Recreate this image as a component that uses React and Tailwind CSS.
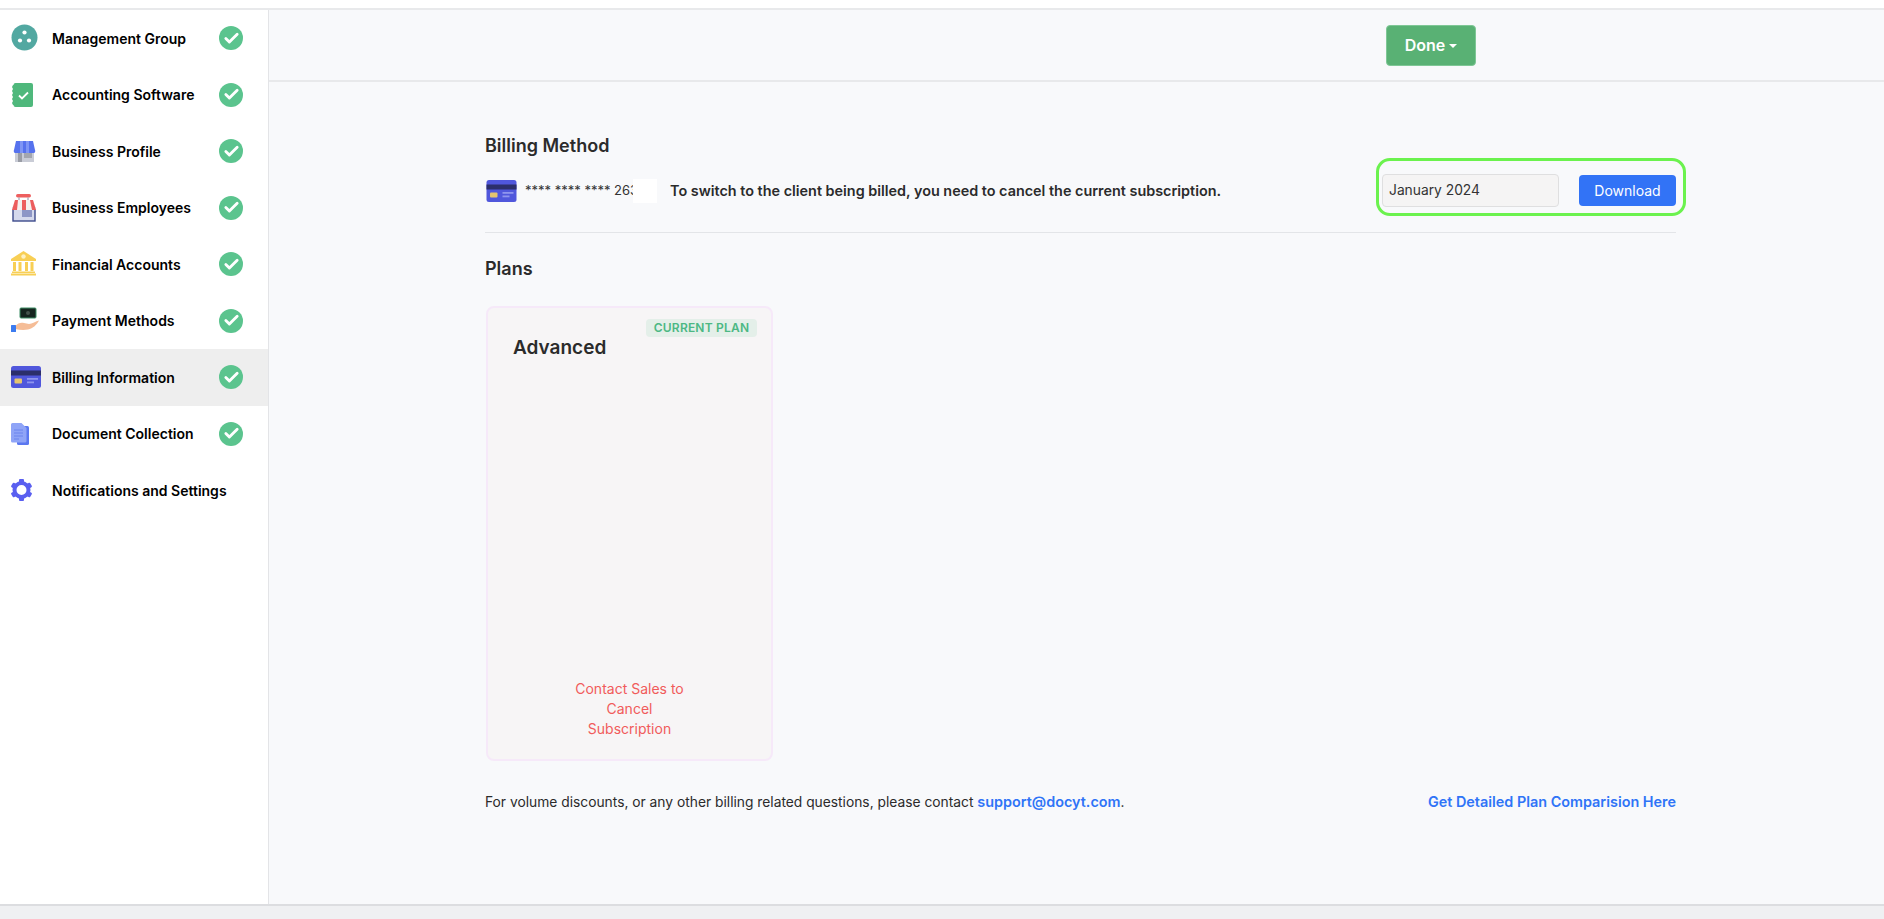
import { Check } from "lucide-react";

const ManagementIcon = () => (
  <svg viewBox="0 0 30 30" className="w-[30px] h-[30px]">
    <circle cx="14.5" cy="14.5" r="13" fill="#52a8a1" />
    <circle cx="14.5" cy="9.5" r="2.1" fill="#fff" />
    <circle cx="10" cy="17.5" r="2.1" fill="#fff" />
    <circle cx="19" cy="17.5" r="2.1" fill="#fff" />
  </svg>
);

const AccountingIcon = () => (
  <svg viewBox="0 0 30 30" className="w-[30px] h-[30px]">
    <rect x="3.5" y="3" width="19.5" height="24" rx="2" fill="#4fb87c" />
    <path d="M3 5l-1 2 1 2-1 2 1 2-1 2 1 2-1 2 1 2-1 2 1 2 2 0 0-20z" fill="#4fb87c" />
    <path d="M9 15.5l3 3 6-6" fill="none" stroke="#fff" strokeWidth="1.8" />
  </svg>
);

const ProfileIcon = () => (
  <svg viewBox="0 0 30 30" className="w-[30px] h-[30px]">
    <rect x="5" y="15" width="19" height="11" fill="#c9ccd6" />
    <rect x="8" y="17" width="4" height="9" fill="#9a9da6" />
    <rect x="14" y="17" width="8" height="5" fill="#a3a6af" />
    <path d="M6 5h17l2 9a2 2 0 0 1-2 3H6a2 2 0 0 1-2-3z" fill="#5672ee" />
    <path d="M10 5h3v12h-3zM16 5h3v12h-3z" fill="#7e95f5" />
  </svg>
);

const EmployeesIcon = () => (
  <svg viewBox="0 0 30 30" className="w-[30px] h-[30px]">
    <rect x="6" y="1" width="15" height="3.5" rx="1.7" fill="#ee5f5f" />
    <path d="M9 4.5v3M18 4.5v3" stroke="#8b8fa8" strokeWidth="1" />
    <rect x="3" y="15" width="22" height="13" fill="#d5d9ec" />
    <rect x="3" y="15" width="22" height="13" fill="none" stroke="#3d4a8c" strokeWidth="1.4" />
    <rect x="12" y="17" width="10" height="7" fill="#8d96c6" />
    <path d="M5 7h18l3 8a2 2 0 0 1-2 2H3a2 2 0 0 1-1-2z" fill="#f4f0ee" />
    <path d="M5 7h3l-1 10H2zM12 7h4v10h-4zM20 7h3l3 10h-4z" fill="#ec5d5d" />
  </svg>
);

const FinancialIcon = () => (
  <svg viewBox="0 0 30 30" className="w-[30px] h-[30px]">
    <path d="M13.5 2L26 10v2H1v-2z" fill="#f8cf55" />
    <circle cx="13.5" cy="7.5" r="2.2" fill="#fdf1c4" />
    <path d="M3 13h3v9H3zM8.500 13h3v9h-3zM15 13h3v9h-3zM20.500 13h3v9h-3z" fill="#f8cf55" />
    <rect x="2" y="22.500" width="23" height="1.500" fill="#f8cf55" />
    <rect x="1" y="24.500" width="25" height="2" fill="#f8cf55" />
  </svg>
);

const PaymentIcon = () => (
  <svg viewBox="0 0 30 30" className="w-[30px] h-[30px]">
    <rect x="10" y="2" width="16" height="10" rx="1" fill="#16251f" stroke="#3e8f66" strokeWidth="1" />
    <circle cx="18" cy="7" r="2" fill="#44534c" />
    <path d="M5 20c3-3 6-4 9-3l5 1c3 0 7-3 10-3.500-2 4-6 8-11 9-4 .8-8 .5-13-.5z" fill="#f5bd97" />
    <rect x="1" y="19" width="5" height="7" rx=".5" fill="#3b7bf0" />
  </svg>
);

const BillingIcon = ({ className }) => (
  <svg viewBox="0 0 30 22" className={className}>
    <rect width="30" height="22" rx="2.500" fill="#5057dc" />
    <rect y="4.500" width="30" height="5" fill="#2c2f6b" />
    <rect x="3.500" y="12.500" width="7.500" height="5" rx="1" fill="#e6c56f" />
    <rect x="16" y="12" width="11" height="1.800" fill="#8f95ee" />
    <rect x="16" y="15.500" width="7" height="1.800" fill="#8f95ee" />
  </svg>
);

const DocumentIcon = () => (
  <svg viewBox="0 0 30 30" className="w-[30px] h-[30px]">
    <rect x="7" y="7" width="12" height="19" rx="1.500" fill="#5b78f0" />
    <path d="M2.500 4h9l5 5v13a1.500 1.500 0 0 1-1.500 1.500H2.500A1.500 1.500 0 0 1 1 22V5.500A1.500 1.500 0 0 1 2.500 4z" fill="#8fa4f7" />
    <path d="M4 11h9M4 14h9M4 17h9M4 20h5" stroke="#6b84ee" strokeWidth="1" />
  </svg>
);

const GearIcon = () => (
  <svg viewBox="0 0 30 30" className="w-[30px] h-[30px]">
    <circle cx="11.500" cy="15" r="7" fill="none" stroke="#5a5ff0" strokeWidth="4" />
    <g fill="#5a5ff0">
      <rect x="9" y="4" width="5" height="4" rx="1" />
      <rect x="9" y="22" width="5" height="4" rx="1" />
      <rect x="9" y="4" width="5" height="4" rx="1" transform="rotate(60 11.500 15)" />
      <rect x="9" y="4" width="5" height="4" rx="1" transform="rotate(120 11.500 15)" />
      <rect x="9" y="4" width="5" height="4" rx="1" transform="rotate(240 11.500 15)" />
      <rect x="9" y="4" width="5" height="4" rx="1" transform="rotate(300 11.500 15)" />
    </g>
  </svg>
);

const steps = [
  { label: "Management Group", icon: <ManagementIcon />, done: true },
  { label: "Accounting Software", icon: <AccountingIcon />, done: true },
  { label: "Business Profile", icon: <ProfileIcon />, done: true },
  { label: "Business Employees", icon: <EmployeesIcon />, done: true },
  { label: "Financial Accounts", icon: <FinancialIcon />, done: true },
  { label: "Payment Methods", icon: <PaymentIcon />, done: true },
  {
    label: "Billing Information",
    icon: <BillingIcon className="w-[30px] h-[22px] ml-px" />,
    done: true,
    active: true,
  },
  { label: "Document Collection", icon: <DocumentIcon />, done: true },
  { label: "Notifications and Settings", icon: <GearIcon />, done: false },
];

export default function App() {
  return (
    <div className="h-screen flex flex-col bg-white font-['Inter',sans-serif] text-[#2b2b2b] overflow-hidden">
      <div className="h-[10px] shrink-0 border-b-2 border-[#e8e9eb]" />

      <div className="flex-1 flex min-h-0">
        {/* Sidebar */}
        <aside className="w-[269px] shrink-0 border-r border-[#e3e4e7] bg-white">
          {steps.map((step) => (
            <div
              key={step.label}
              className={`flex items-center h-[56.5px] pl-[10px] ${step.active ? "bg-[#eeeeee]" : ""}`}
            >
              <div className="w-[42px] shrink-0">{step.icon}</div>
              <span className="w-[167px] shrink-0 text-[14px] font-semibold text-black whitespace-nowrap">
                {step.label}
              </span>
              {step.done && (
                <span className="w-6 h-6 rounded-full bg-[#5bc48e] flex items-center justify-center">
                  <Check size={17} strokeWidth={4} className="text-white" />
                </span>
              )}
            </div>
          ))}
        </aside>

        {/* Main */}
        <main className="flex-1 bg-[#f8f9fb] min-w-0">
          <div className="h-[72px] border-b-2 border-[#e8e9eb] flex items-center pl-[1117px]">
            <button className="w-[90px] h-[41px] rounded bg-[#59b174] border border-[#7fc796] text-white text-[16px] font-semibold flex items-center justify-center gap-1">
              Done
              <span className="mt-[2px] border-x-[4px] border-x-transparent border-t-[4px] border-t-white" />
            </button>
          </div>

          <div className="pl-[216px] pr-[208px]">
            <h2 className="mt-[52px] text-[18px] leading-6 font-semibold">Billing Method</h2>

            <div className="relative mt-[16px] h-[33px] flex items-center">
              <BillingIcon className="w-[31px] h-[22px] ml-px" />
              <span className="ml-[8px] w-[145px] text-[13px] text-[#333] whitespace-nowrap">
                **** **** **** 263
              </span>
              <span className="absolute left-[148px] top-[5px] w-[24px] h-[24px] bg-white" />
              <span className="text-[14.4px] font-semibold whitespace-nowrap">
                To switch to the client being billed, you need to cancel the current subscription.
              </span>

              <div className="ml-auto flex items-center gap-5">
                <div className="w-[177px] h-[33px] ml-px rounded border border-[#dfdfe0] bg-[#f5f4f4] pl-[6px] flex items-center text-[13.8px] text-[#333]">
                  January 2024
                </div>
                <button className="w-[97px] h-[31px] rounded bg-[#3273f6] text-white text-[14px] font-normal">
                  Download
                </button>
              </div>

              <div className="absolute right-[-10px] top-[-16px] w-[310px] h-[58px] rounded-[14px] border-[3px] border-[#6bf24e] pointer-events-none" />
            </div>

            <div className="mt-[25px] h-px bg-[#e3e5e8]" />

            <h2 className="mt-[24px] text-[18px] leading-6 font-semibold">Plans</h2>

            <div className="relative mt-[25px] ml-px w-[287px] h-[455px] rounded-lg border-2 border-[#f6e9f9] bg-[#f7f5f6] flex flex-col justify-between pl-[25px] pr-[25px] pt-[26px] pb-[20px]">
              <span className="absolute top-[11px] right-[14px] w-[111px] h-[18px] rounded bg-[#e4efe9] text-[#4cb884] text-[12px] leading-[18px] font-semibold tracking-[0.2px] text-center whitespace-nowrap">
                CURRENT PLAN
              </span>
              <div className="text-[19px] leading-[28px] font-semibold">Advanced</div>
              <div className="text-[14px] leading-5 text-[#f15b5b] text-center">
                Contact Sales to
                <br />
                Cancel
                <br />
                Subscription
              </div>
            </div>

            <div className="mt-[31px] h-5 flex items-center justify-between text-[13.8px] leading-5">
              <span>
                For volume discounts, or any other billing related questions, please contact{" "}
                <a className="font-semibold text-[14.4px] text-[#2f74f7]">support@docyt.com</a>.
              </span>
              <a className="font-semibold text-[14.4px] text-[#2f74f7]">Get Detailed Plan Comparision Here</a>
            </div>
          </div>
        </main>
      </div>

      <div className="h-[15px] shrink-0 border-t-2 border-[#dcdde0] bg-[#eff0f2]" />
    </div>
  );
}
